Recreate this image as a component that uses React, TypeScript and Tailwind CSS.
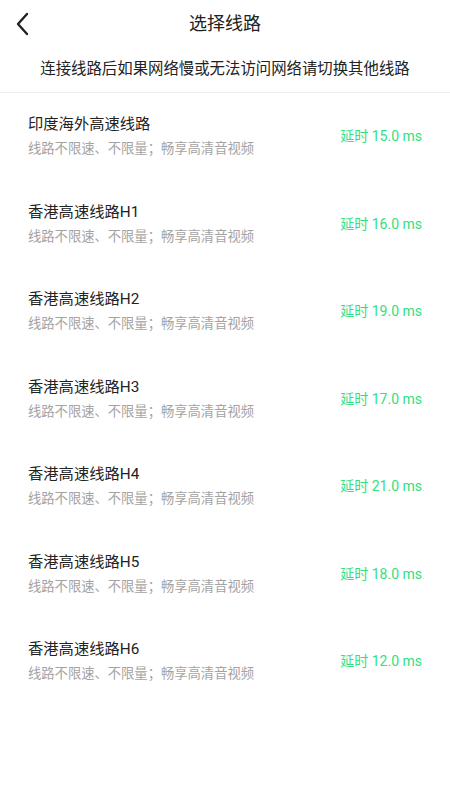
import React from "react";

const rows = [
  { name: "印度海外高速线路", ms: "15.0" },
  { name: "香港高速线路H1", ms: "16.0" },
  { name: "香港高速线路H2", ms: "19.0" },
  { name: "香港高速线路H3", ms: "17.0" },
  { name: "香港高速线路H4", ms: "21.0" },
  { name: "香港高速线路H5", ms: "18.0" },
  { name: "香港高速线路H6", ms: "12.0" },
];

export default function App() {
  return (
    <div
      className="w-[450px] h-[800px] bg-white overflow-hidden"
      style={{ fontFamily: 'Roboto, "Noto Sans CJK SC", sans-serif' }}
    >
      <div className="relative h-[48px] flex items-center justify-center">
        <button className="absolute left-[10px] top-[10px] w-[24px] h-[28px] flex items-center justify-center">
          <svg width="16" height="24" viewBox="0 0 16 24" fill="none">
            <path d="M13 2 L4 12 L13 22" stroke="#222" strokeWidth="2.4" strokeLinecap="round" strokeLinejoin="round" />
          </svg>
        </button>
        <div className="text-[18px] text-[#222] leading-none">选择线路</div>
      </div>
      <div className="h-[45px] flex items-center justify-center text-[15.4px] text-[#222] border-b border-[#eeeeee]">
        连接线路后如果网络慢或无法访问网络请切换其他线路
      </div>
      <div className="flex flex-col">
        {rows.map((r) => (
          <div key={r.name} className="h-[87.5px] flex items-center justify-between pl-[28px] pr-[28px]">
            <div className="flex flex-col">
              <div className="text-[15.3px] leading-[20px] text-[#222]">{r.name}</div>
              <div className="text-[13.3px] leading-[20px] mt-[5px] text-[#a3a3a3]">线路不限速、不限量；畅享高清音视频</div>
            </div>
            <div className="text-[14px] text-[#33e080]">延时 {r.ms} ms</div>
          </div>
        ))}
      </div>
    </div>
  );
}
